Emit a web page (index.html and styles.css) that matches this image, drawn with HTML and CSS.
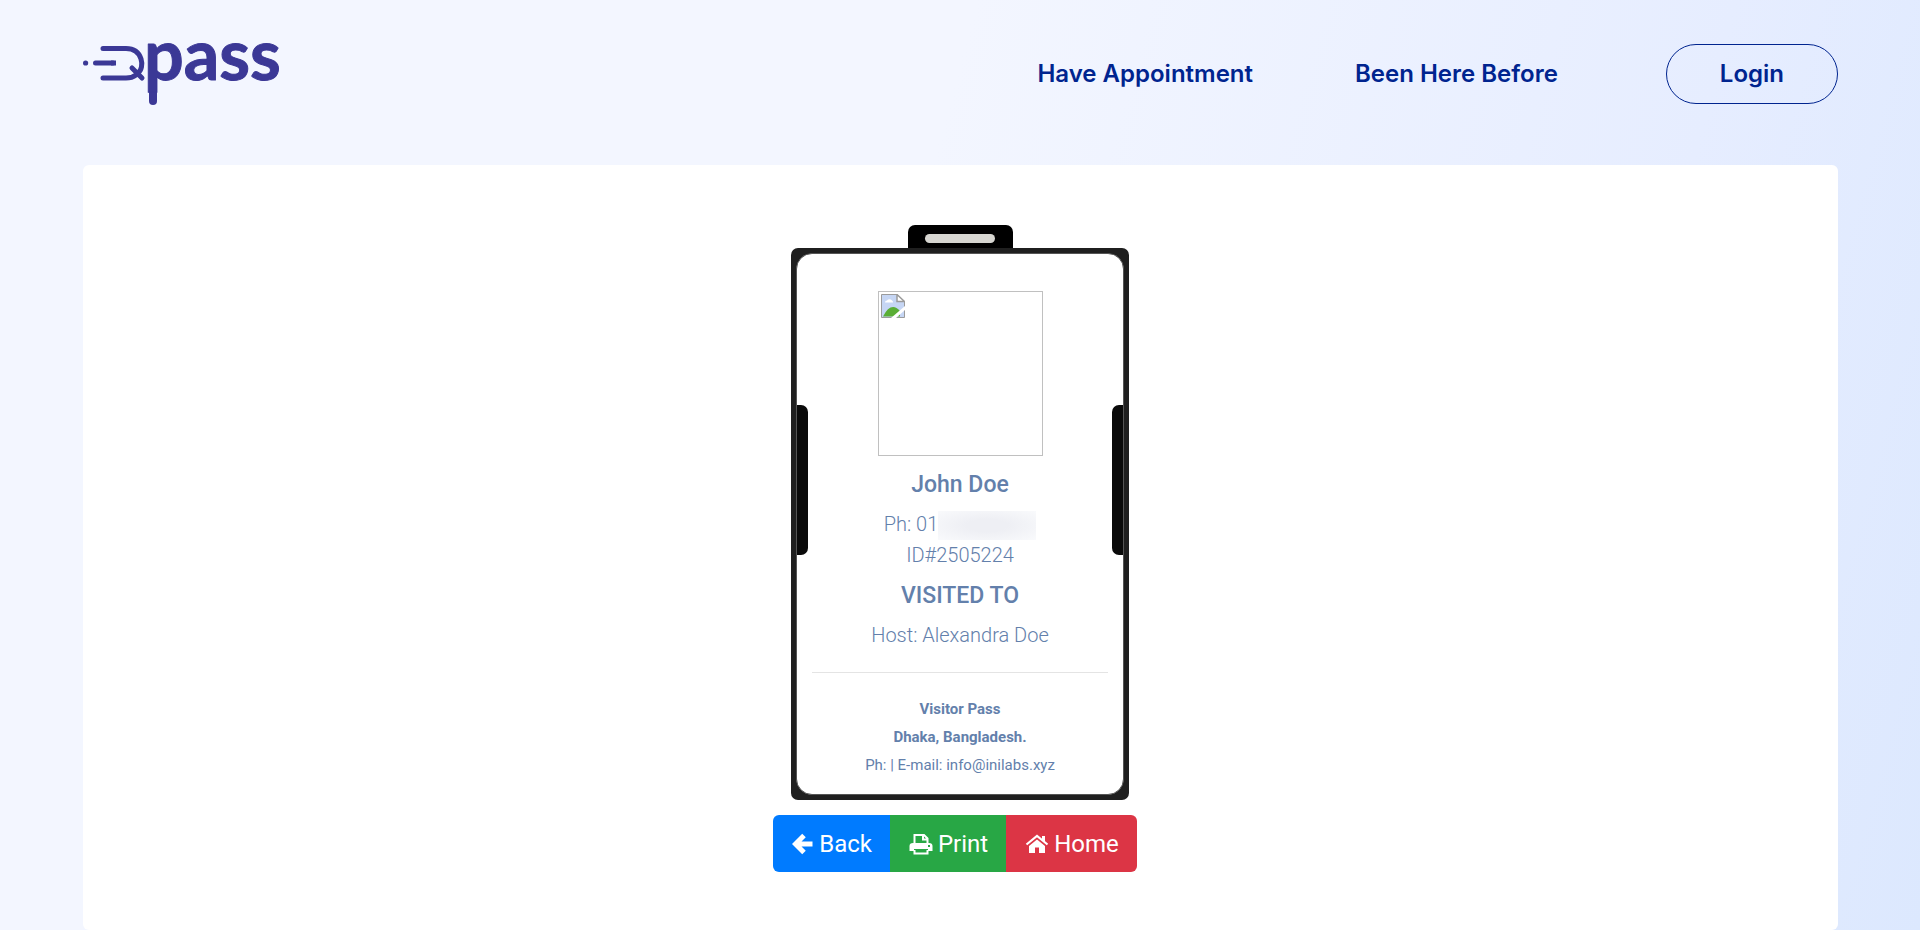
FILE: index.html
```html
<!DOCTYPE html>
<html lang="en">
<head>
<meta charset="utf-8">
<title>Qpass – Visitor Pass</title>
<link rel="stylesheet" href="styles.css">
</head>
<body>
<header class="header">
  <a class="logo" href="#" aria-label="Qpass">
    <svg class="logo-svg" viewBox="0 0 200 60" role="img" aria-hidden="true">
      <g fill="none" stroke="#3b3896" stroke-width="5" stroke-linecap="round">
        <path d="M20 4.500H43C60 4.500 62 24 55 29"/>
        <path d="M20 34H43Q49 34 53 31"/>
        <path d="M49 24L59 34"/>
        <path d="M12.500 19H30"/>
        <path d="M28 19H33" stroke-linecap="butt"/>
        <path d="M70 5V57" stroke-width="8"/>
      </g>
      <circle cx="2.600" cy="19" r="2.600" fill="#3b3896"/>
      <text class="logo-text" x="61" y="36">pass</text>
    </svg>
  </a>
  <nav class="nav">
    <a class="nav-link" href="#">Have Appointment</a>
    <a class="nav-link" href="#">Been Here Before</a>
    <a class="nav-link login" href="#">Login</a>
  </nav>
</header>
<main class="panel">
  <section class="badge">
    <div class="badge-clip"><span class="badge-slot"></span></div>
    <div class="badge-frame">
      <div class="badge-card">
        <span class="tab tab-left"></span>
        <span class="tab tab-right"></span>
        <div class="photo" role="img" aria-label="Visitor photo">
          <svg class="photo-icon" viewBox="0 0 24 24" aria-hidden="true">
            <path d="M.500 .500H16L23.500 7.500V23.500H.500Z" fill="#c6d6f4" stroke="#9b9b9b"/>
            <path d="M4 8.500a2 2 0 0 1 2-2 3 3 0 0 1 5 0 2 2 0 0 1 1 2Z" fill="#fff"/>
            <path d="M2 22.500Q10 7 19 17V22.500Z" fill="#5aae35"/>
            <path d="M16 .500V7.500H23.500Z" fill="#fff" stroke="#9b9b9b" stroke-width="1.500"/>
            <path d="M10 24L24 12V16L15 24Z" fill="#fff"/>
          </svg>
        </div>
        <h2 class="title">John Doe</h2>
        <p class="line">Ph: 01<span class="redacted"></span></p>
        <p class="line">ID#2505224</p>
        <h2 class="title">VISITED TO</h2>
        <p class="line">Host: Alexandra Doe</p>
        <hr class="rule">
        <p class="small strong">Visitor Pass</p>
        <p class="small strong">Dhaka, Bangladesh.</p>
        <p class="small">Ph: | E-mail: info@inilabs.xyz</p>
      </div>
    </div>
  </section>
  <div class="actions">
    <button class="btn btn-back" type="button">
      <svg class="icon icon-arrow" viewBox="0 0 22 24" aria-hidden="true"><path d="M12 3.500L3.500 12L12 20.500M5 12H20.500" fill="none" stroke="#fff" stroke-width="5"/></svg>
      Back</button>
    <button class="btn btn-print" type="button">
      <svg class="icon" viewBox="0 0 24 24" aria-hidden="true"><path d="M5.500 12V3H15L18.500 6.500V12M5.500 18V21.500H18.500V18M14 3V7.500H18.500" fill="none" stroke="#fff" stroke-width="2"/><path fill-rule="evenodd" d="M4 11H20Q23.500 11 23.500 14V19H19V17H5V19H.500V14Q.500 11 4 11ZM19 13V15H21V13Z" fill="#fff"/></svg>
      Print</button>
    <button class="btn btn-home" type="button">
      <svg class="icon" viewBox="0 0 24 24" aria-hidden="true"><path d="M12 7.500L20 14V21H14V15.500H10V21H4V14Z" fill="#fff"/><path d="M1.500 12.500L12 4L22.500 12.500" fill="none" stroke="#fff" stroke-width="2.200"/><path d="M17 4H20V10L17 7.500Z" fill="#fff"/></svg>
      Home</button>
  </div>
</main>
</body>
</html>
```
FILE: styles.css
```css
* { box-sizing: border-box; }

body {
  margin: 0;
  min-height: 100vh;
  padding: 0 82px 0 83px;
  display: flex;
  flex-direction: column;
  font-family: Roboto, "Liberation Sans", sans-serif;
  color: #6380ab;
  background: linear-gradient(105deg, #f3f6ff 0%, #f3f6ff 45%, #e6edff 80%, #dce8fe 100%);
}

.header {
  display: flex;
  justify-content: space-between;
  align-items: flex-start;
  padding: 44px 0 61px;
}

.logo-svg { display: block; width: 200px; height: 60px; overflow: visible; }
.logo-text {
  font: 700 70px Lato, sans-serif;
  fill: #3b3896;
  stroke: #3b3896;
  stroke-width: 1;
  stroke-linejoin: round;
}

.nav { display: flex; align-items: center; }
.nav-link {
  margin-right: 102px;
  font: 600 24px/30px Inter, sans-serif;
  color: #00248f;
  text-decoration: none;
}
.login {
  margin: 0 0 0 6px;
  padding: 14px 53px;
  border: 1px solid #00248f;
  border-radius: 30px;
}

.panel {
  flex: 1;
  display: flex;
  flex-direction: column;
  align-items: center;
  padding: 60px 1px 58px 0;
  background: #fff;
  border-radius: 6px;
}

.badge { display: flex; flex-direction: column; align-items: center; }
.badge-clip {
  width: 105px;
  height: 23px;
  padding-top: 9px;
  background: #000;
  border-radius: 7px 7px 0 0;
}
.badge-slot {
  display: block;
  width: 70px;
  height: 9px;
  margin: 0 auto;
  background: #d7d6d1;
  border-radius: 5px;
}
.badge-frame {
  width: 338px;
  padding: 5px;
  background: #1f1f1f;
  border-radius: 7px;
}
.badge-card {
  position: relative;
  padding: 37px 15px 20px;
  background: #fff;
  border: 1px solid #555;
  border-radius: 16px;
  text-align: center;
}
.tab {
  position: absolute;
  top: 151px;
  width: 11px;
  height: 150px;
  background: #0a0a0a;
}
.tab-left { left: 0; border-radius: 0 7px 7px 0; }
.tab-right { right: 0; border-radius: 7px 0 0 7px; }

.photo {
  width: 165px;
  height: 165px;
  margin: 0 auto 14px;
  padding: 2px;
  border: 1px solid #c0c0c0;
}
.photo-icon { display: block; width: 24px; height: 24px; }

.title { margin: 14px 0 13px; font-size: 23px; line-height: 29px; font-weight: 500; }
.line { margin: 0 0 6px; font-size: 20px; line-height: 24px; font-weight: 300; }
.redacted {
  display: inline-block;
  width: 98px;
  height: 29px;
  margin: -3px 0;
  vertical-align: middle;
  background: radial-gradient(ellipse, #eeeff4 30%, #f9fafc 100%);
}
.rule { margin: 25px 0 27px; border: 0; border-top: 1px solid #e4e4e4; }
.small { margin: 0 0 10px; font-size: 15px; line-height: 18px; }
.small:last-child { margin: 0; }
.strong { font-weight: 700; }

.actions { display: flex; margin: 15px 10px 0 0; }
.btn {
  display: flex;
  align-items: center;
  gap: 5px;
  height: 57px;
  padding: 0 18px 0 19px;
  border: 0;
  font: 400 24px/36px Roboto, sans-serif;
  color: #fff;
}
.icon { width: 24px; height: 24px; }
.icon-arrow { width: 22px; }
.btn-back { background: #007bff; border-radius: 6px 0 0 6px; }
.btn-print { background: #28a745; }
.btn-home { background: #dc3545; border-radius: 0 6px 6px 0; }
```
